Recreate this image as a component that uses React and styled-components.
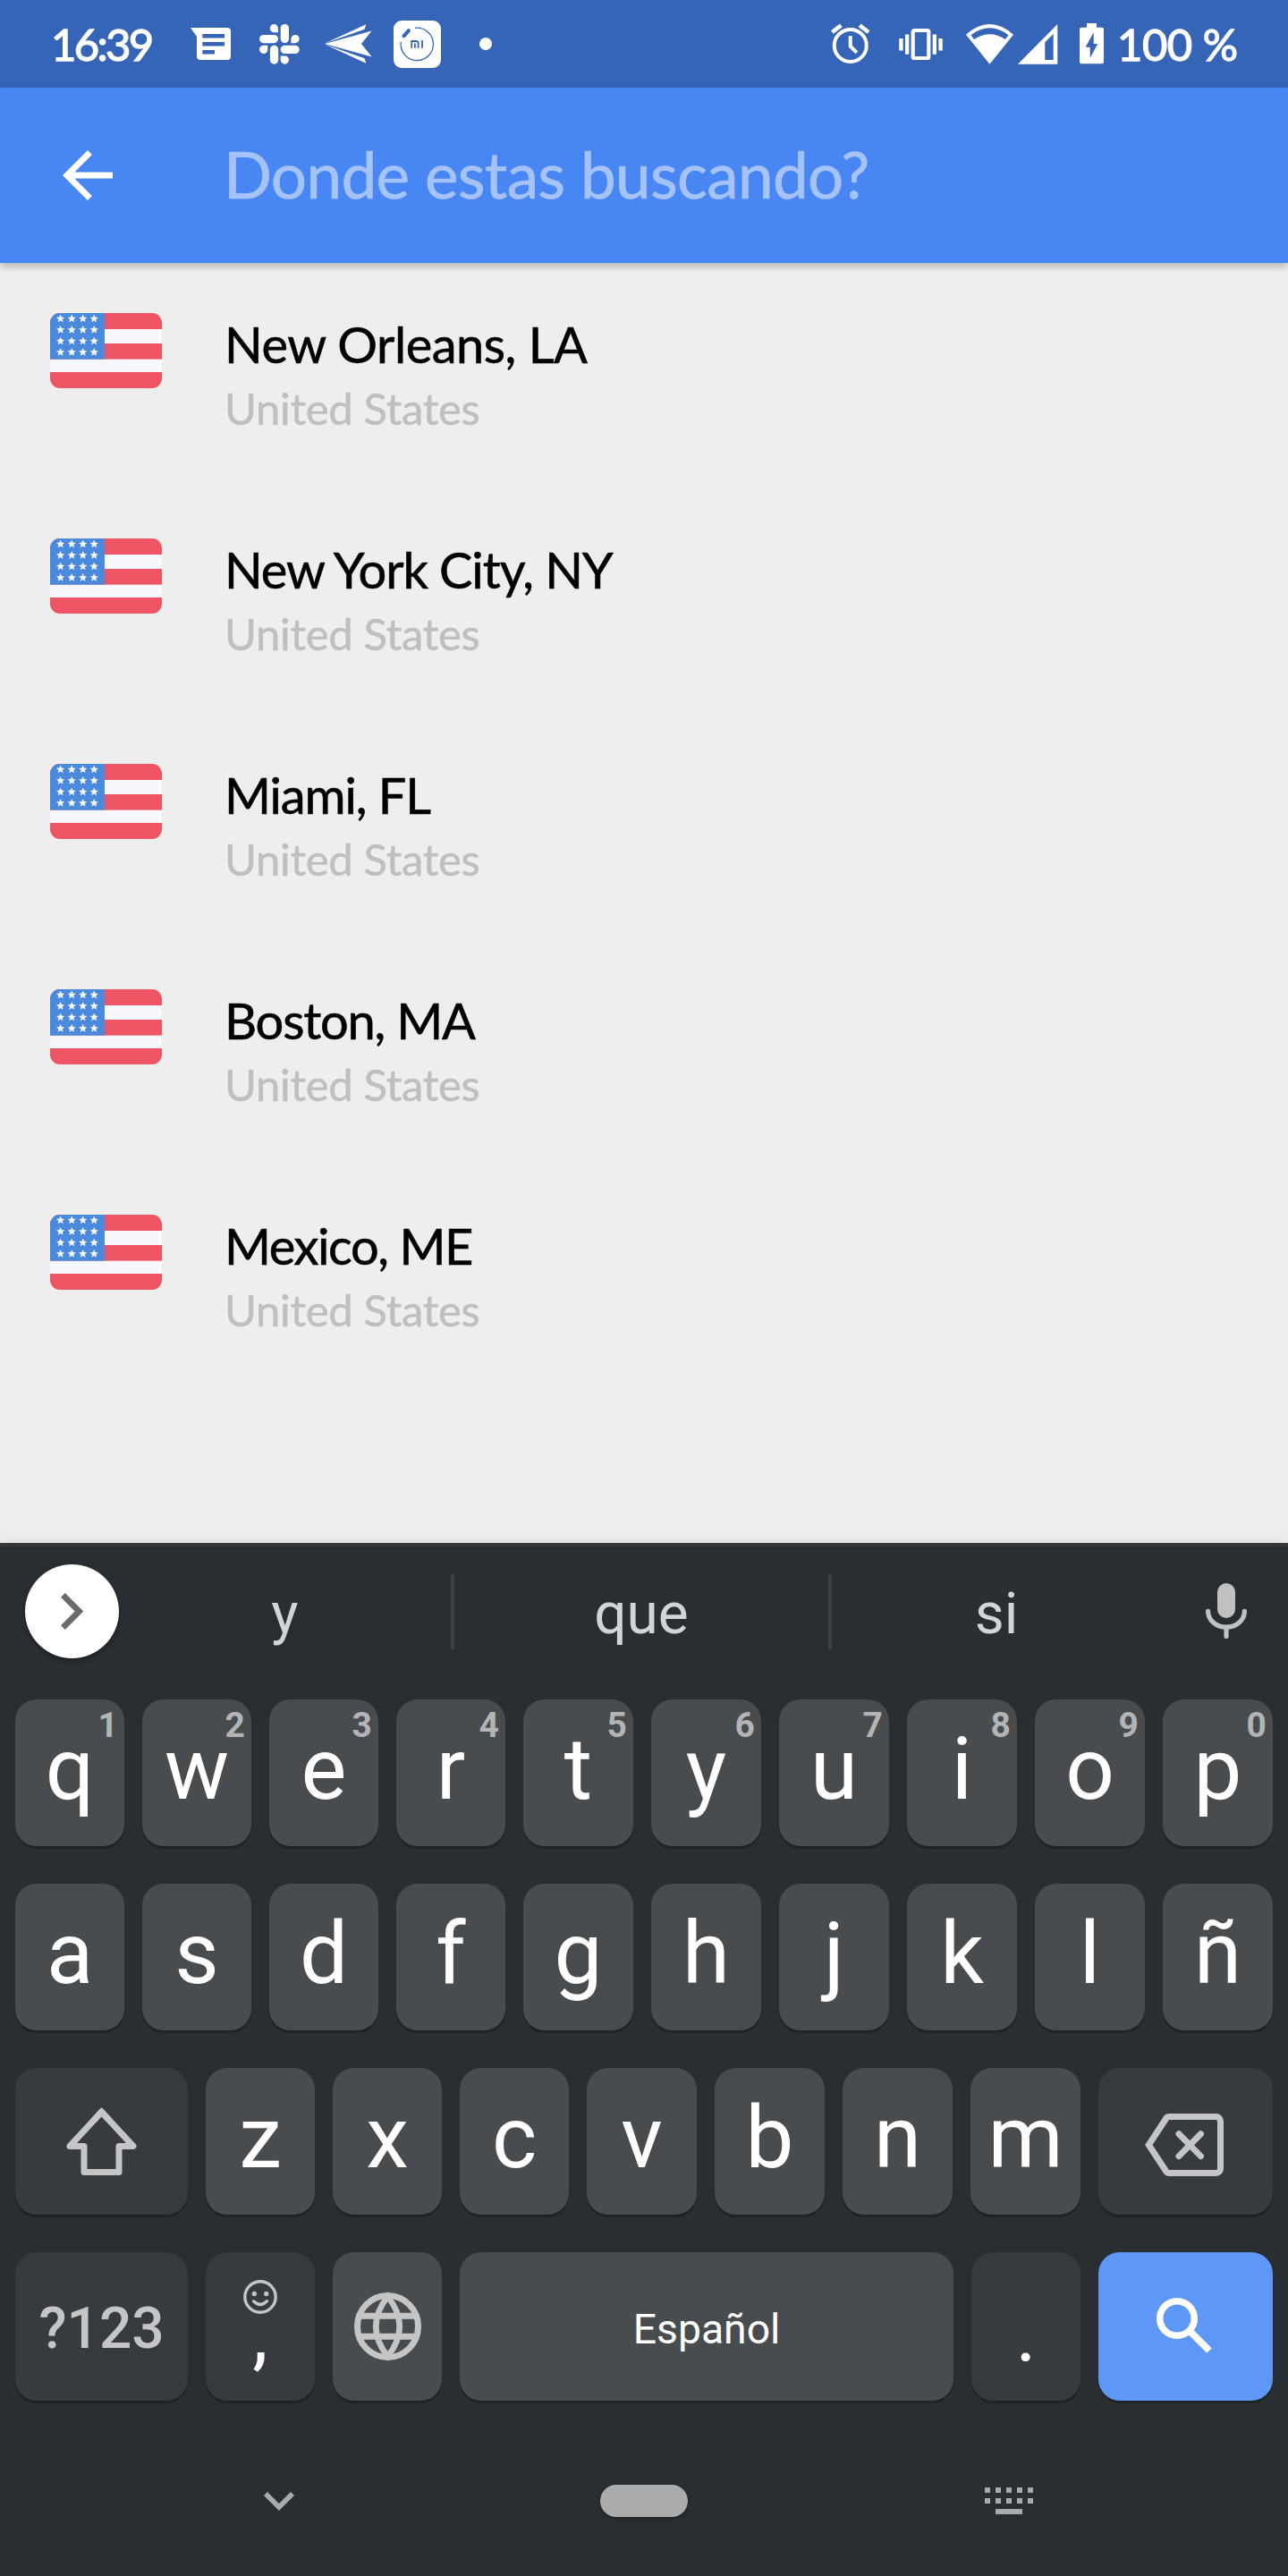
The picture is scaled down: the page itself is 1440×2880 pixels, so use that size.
import React from "react";
import styled, { createGlobalStyle } from "styled-components";

const GlobalStyle = createGlobalStyle`
  body { margin: 0; background: #eeeeee; }
  *, *::before, *::after { box-sizing: border-box; }
`;

const Screen = styled.div`
  width: 1440px;
  height: 2880px;
  display: flex;
  flex-direction: column;
  overflow: hidden;
  background: #eeeeee;
  font-family: Lato, "Liberation Sans", sans-serif;
`;

const Icon = styled.svg`
  display: block;
  flex: none;
  overflow: visible;
  width: ${(p) => p.$w}px;
  height: ${(p) => p.$h}px;
  margin-left: ${(p) => p.$ml || 0}px;
  margin-top: ${(p) => p.$mt || 0}px;
`;

/* ---------- status bar ---------- */

const StatusBar = styled.header`
  height: 98px;
  flex: none;
  display: flex;
  align-items: center;
  justify-content: space-between;
  padding: 0 56px 0 57px;
  background: #3665b8;
  color: #fff;
`;

const StatusGroup = styled.div`
  display: flex;
  align-items: center;
`;

const StatusText = styled.span`
  font-size: 49px;
  line-height: 60px;
  margin-top: -1px;
  white-space: nowrap;
  -webkit-text-stroke: 1.3px currentColor;
`;

const Clock = styled(StatusText)`
  width: 156px;
  letter-spacing: -2.7px;
`;

const BatteryText = styled(StatusText)`
  width: 135px;
  margin-left: 15px;
  letter-spacing: -0.5px;
`;

const Dot = styled.span`
  width: 14px;
  height: 14px;
  border-radius: 50%;
  background: #fff;
  margin-left: 43px;
`;

const MessagesIcon = () => (
  <Icon $w={45} $h={36} viewBox="0 0 45 36" fill="#fff" fillRule="evenodd">
    <path d="M0 0H41a4 4 0 0 1 4 4V32a4 4 0 0 1-4 4H11a4 4 0 0 1-4-4V10ZM13.3 7v4.5H38V7ZM13.3 16v4.5H38V16ZM13.3 25v4.5H27V25Z" />
  </Icon>
);

const SlackIcon = () => (
  <Icon $w={45} $h={45} $ml={32} viewBox="0 0 45 45" fill="#fff">
    <path d="M21 9.3V4.65A4.6 4.6 0 1 0 16.5 9.3Z" />
    <rect x="23.7" y="0" width="9.3" height="21" rx="4.65" />
    <rect x="0" y="11.9" width="21" height="9.3" rx="4.65" />
    <path d="M9.3 23.7H4.65A4.65 4.65 0 1 0 9.3 28.4Z" />
    <rect x="11.9" y="23.7" width="9.3" height="21" rx="4.65" />
    <rect x="23.7" y="23.7" width="21" height="9.3" rx="4.65" />
    <path d="M35.4 21.2H40A4.65 4.65 0 1 0 35.4 16.5Z" />
    <path d="M23.7 35.4V40A4.65 4.65 0 1 0 28.4 35.4Z" />
  </Icon>
);

const PlaneIcon = () => (
  <Icon $w={53} $h={44} $ml={28} viewBox="0 0 53 44" fill="#fff">
    <path d="M0 22L52.6 7.4L41 22L52.6 36.4Z" />
    <path d="M0 21.6L46.3 .2L44.5 5.8Z" />
    <path d="M0 22.4L46.3 43.8L44.5 38.2Z" />
  </Icon>
);

const MiIcon = () => (
  <Icon $w={53} $h={53} $ml={24} viewBox="0 0 53 53">
    <rect width="53" height="53" rx="9" fill="#fff" />
    <g fill="none" stroke="#3665b8">
      <path d="M24 8.3A18.2 18.2 0 1 1 8.2 24" strokeWidth="1.3" />
      <path d="M11.6 17.2L17 11.2" strokeWidth="4" strokeLinecap="round" />
      <path d="M20.2 30.8V23H25.4Q27.6 23 27.6 25.4V30.8M23.9 25.6V30.8M32 22V30.8" strokeWidth="1.8" />
    </g>
  </Icon>
);

const AlarmIcon = () => (
  <Icon $w={43.5} $h={44} viewBox="0 0 43.5 44" fill="none" stroke="#fff" strokeWidth="4">
    <circle cx="21.75" cy="23.9" r="18" />
    <path d="M21.75 13.2V24.6L28.9 31.8" />
    <path d="M1.4 9L11.4 1.4M42.1 9L32.1 1.4" strokeWidth="4.6" />
  </Icon>
);

const VibrateIcon = () => (
  <Icon $w={49} $h={35} $ml={33} viewBox="0 0 49 35" fill="#fff">
    <rect x="15.7" y="2" width="17.6" height="31" rx="1.6" fill="none" stroke="#fff" strokeWidth="4.2" />
    <path d="M7 6.6h4.3v22.2H7ZM.3 11h4.3v13.6H.3ZM37.7 6.6H42v22.2h-4.3ZM44.4 11h4.3v13.6h-4.3Z" />
  </Icon>
);

const WifiIcon = () => (
  <Icon $w={53} $h={44.7} $ml={26} viewBox="0 0 53 44.7" fill="#fff" fillRule="evenodd">
    <path d="M0 11.7Q26.5-11.7 53 11.7L26.5 44.7ZM5.5 12.2L9 17Q26.5 5.6 44 17L47.5 12.2Q26.5-3.6 5.5 12.2Z" />
  </Icon>
);

const SignalIcon = () => (
  <Icon $w={44.3} $h={44.7} $ml={4.5} viewBox="0 0 44.3 44.7" fill="#fff" fillRule="evenodd">
    <path d="M0 44.7L44.3 0V44.7ZM30.3 20.3V40H39.7V11Z" />
  </Icon>
);

const BatteryIcon = () => (
  <Icon $w={27} $h={45.3} $ml={25} viewBox="0 0 27 45.3" fill="#fff" fillRule="evenodd">
    <path d="M8 0H19V4.7H25a2 2 0 0 1 2 2V43.3a2 2 0 0 1-2 2H2a2 2 0 0 1-2-2V6.7a2 2 0 0 1 2-2H8ZM15.7 10.3L6.7 26.7H11.7V38.7L20.3 23H15.7Z" />
  </Icon>
);

/* ---------- search bar ---------- */

const AppBar = styled.div`
  height: 196px;
  flex: none;
  display: flex;
  align-items: center;
  padding-left: 70px;
  background: #4886f3;
  box-shadow: 0 3px 9px rgba(0, 0, 0, 0.28);
`;

const SearchHint = styled.div`
  margin-left: 124px;
  padding-bottom: 3px;
  font-size: 71px;
  line-height: 90px;
  letter-spacing: -0.65px;
  color: #a5c3f9;
  white-space: nowrap;
  -webkit-text-stroke: 0.7px currentColor;
`;

/* ---------- results ---------- */

const Results = styled.ul`
  flex: 1;
  min-height: 0;
  margin: 0;
  padding: 56px 0 0 56px;
  list-style: none;
`;

const Result = styled.li`
  height: 252px;
  display: flex;
  align-items: flex-start;
  gap: 70px;
`;

const FlagSvg = styled.svg`
  display: block;
  width: 125px;
  height: 84px;
  border-radius: 11px;
`;

const City = styled.div`
  font-size: 56px;
  line-height: 70px;
  color: #000;
  letter-spacing: ${(p) => p.$ls}px;
  white-space: nowrap;
  -webkit-text-stroke: 0.6px currentColor;
`;

const Country = styled.div`
  margin-top: 1px;
  font-size: 49px;
  line-height: 70px;
  letter-spacing: -0.3px;
  color: #bfbfbf;
  white-space: nowrap;
  -webkit-text-stroke: 0.5px currentColor;
`;

const starPoints = (cx, cy, r) =>
  Array.from({ length: 10 }, (_, i) => {
    const a = (Math.PI / 5) * i - Math.PI / 2;
    const d = i % 2 ? r * 0.45 : r;
    return `${(cx + d * Math.cos(a)).toFixed(2)},${(cy + d * Math.sin(a)).toFixed(2)}`;
  }).join(" ");

const Flag = () => (
  <FlagSvg viewBox="0 0 125 84">
    <rect width="125" height="84" fill="#ee5564" />
    <rect y="18" width="125" height="16" fill="#f5f7fc" />
    <rect y="51.6" width="125" height="14.4" fill="#f5f7fc" />
    <rect width="61" height="51.6" fill="#4a89dc" />
    {[6.4, 18.9, 31.4, 43.9].map((y) =>
      [11.6, 24.2, 36.7, 49.2].map((x) => (
        <polygon key={`${x}-${y}`} points={starPoints(x, y, 4.9)} fill="#f5f7fc" />
      ))
    )}
  </FlagSvg>
);

/* ---------- keyboard ---------- */

const Keyboard = styled.section`
  height: 1155px;
  flex: none;
  display: flex;
  flex-direction: column;
  background: #292e32;
  border-top: 4px solid #32383c;
  box-shadow: 0 -2px 14px rgba(0, 0, 0, 0.07);
  font-family: Roboto, sans-serif;
`;

const Suggestions = styled.div`
  height: 171px;
  flex: none;
  display: flex;
  align-items: center;
  padding: 0 46px 26px 28px;
`;

const ExpandButton = styled.div`
  width: 105px;
  height: 105px;
  flex: none;
  display: flex;
  align-items: center;
  justify-content: center;
  border-radius: 50%;
  background: #fff;
  box-shadow: 0 3px 4px rgba(0, 0, 0, 0.3);
`;

const Suggestion = styled.div`
  width: ${(p) => p.$w}px;
  padding-top: 7px;
  text-align: center;
  font-size: 64px;
  line-height: 80px;
  color: #d2d4d5;
`;

const Divider = styled.div`
  width: 4px;
  height: 84px;
  background: #3e4246;
`;

const Keys = styled.div`
  display: flex;
  flex-direction: column;
  gap: 42px;
  padding: 0 17px;
`;

const KeyRow = styled.div`
  display: grid;
  grid-template-columns: ${(p) => p.$columns};
  column-gap: 20px;
  height: ${(p) => p.$h || 164}px;
`;

const letterColumns = "repeat(4, 122px) repeat(6, 123px)";
const shiftColumns = "193px repeat(3, 122px) repeat(4, 123px) 195px";
const bottomColumns = "193px 122px 122px 1fr 122px 195px";

const keyColors = { light: "#494c4e", dark: "#373b3f", accent: "#5e97f6" };

const Key = styled.div`
  position: relative;
  display: flex;
  align-items: center;
  justify-content: center;
  border-radius: 24px;
  background: ${(p) => keyColors[p.$tone || "light"]};
  box-shadow: 0 3px 0 #1f2326;
`;

const Letter = styled.span`
  padding-bottom: 8px;
  font-size: 96px;
  line-height: 110px;
  color: #fff;
`;

const Hint = styled.span`
  position: absolute;
  top: 9px;
  right: 7px;
  font-size: 39px;
  font-weight: 700;
  line-height: 40px;
  color: #b2b4b5;
`;

const PunctuationKey = styled(Key)`
  flex-direction: column;
  justify-content: flex-end;
  gap: 2px;
  padding-bottom: 55px;
`;

const Punctuation = styled.span`
  font-size: 88px;
  line-height: 40px;
  color: #fff;
`;

const KeyLabel = styled.span`
  padding-top: ${(p) => p.$pt}px;
  font-size: ${(p) => p.$size}px;
  font-weight: ${(p) => p.$weight || 400};
  line-height: 76px;
  color: ${(p) => p.$color};
`;

const NavBar = styled.nav`
  flex: 1;
  display: grid;
  grid-template-columns: 624px 192px 624px;
  align-items: center;
  justify-items: center;
  padding-top: 28px;
`;

const HomePill = styled.div`
  width: 98px;
  height: 36px;
  border-radius: 18px;
  background: #a9abad;
  box-shadow: 0 2px 4px rgba(0, 0, 0, 0.25);
`;

const grey = "#c3c5c6";

const cities = [
  ["New Orleans, LA", -0.5],
  ["New York City, NY", -1.1],
  ["Miami, FL", -1.1],
  ["Boston, MA", -1.2],
  ["Mexico, ME", -1.4],
];

export default function App() {
  return (
    <Screen>
      <GlobalStyle />
      <StatusBar>
        <StatusGroup>
          <Clock>16:39</Clock>
          <MessagesIcon />
          <SlackIcon />
          <PlaneIcon />
          <MiIcon />
          <Dot />
        </StatusGroup>
        <StatusGroup>
          <AlarmIcon />
          <VibrateIcon />
          <WifiIcon />
          <SignalIcon />
          <BatteryIcon />
          <BatteryText>100 %</BatteryText>
        </StatusGroup>
      </StatusBar>

      <AppBar>
        <Icon $w={56} $h={56} viewBox="4 4 16 16" fill="#fff">
          <path d="M20 11H7.83l5.59-5.59L12 4l-8 8 8 8 1.41-1.41L7.83 13H20v-2z" />
        </Icon>
        <SearchHint>Donde estas buscando?</SearchHint>
      </AppBar>

      <Results>
        {cities.map(([name, ls]) => (
          <Result key={name}>
            <Flag />
            <div>
              <City $ls={ls}>{name}</City>
              <Country>United States</Country>
            </div>
          </Result>
        ))}
      </Results>

      <Keyboard>
        <Suggestions>
          <ExpandButton>
            <Icon $w={25.3} $h={41} viewBox="8.59 6 7.41 12" fill="#6b6b6b">
              <path d="M8.59 16.59L13.17 12 8.59 7.41 10 6l6 6-6 6z" />
            </Icon>
          </ExpandButton>
          <Suggestion $w={371}>y</Suggestion>
          <Divider />
          <Suggestion $w={418}>que</Suggestion>
          <Divider />
          <Suggestion $w={368}>si</Suggestion>
          <Icon $w={46} $h={62} $ml={50} $mt={-2} viewBox="0 0 46 62" fill="none" stroke="#bfc1c2">
            <rect x="13" y="0" width="20" height="39" rx="10" fill="#bfc1c2" stroke="none" />
            <path d="M2.6 31.4a20.4 17.8 0 0 0 40.8 0M23 50V59.4" strokeWidth="5.2" strokeLinecap="round" />
          </Icon>
        </Suggestions>

        <Keys>
          <KeyRow $columns={letterColumns}>
            {[..."qwertyuiop"].map((c, i) => (
              <Key key={c}>
                <Letter>{c}</Letter>
                <Hint>{(i + 1) % 10}</Hint>
              </Key>
            ))}
          </KeyRow>
          <KeyRow $columns={letterColumns}>
            {[..."asdfghjklñ"].map((c) => (
              <Key key={c}>
                <Letter>{c}</Letter>
              </Key>
            ))}
          </KeyRow>
          <KeyRow $columns={shiftColumns}>
            <Key $tone="dark">
              <Icon $w={79} $h={76} viewBox="0 0 79 76" fill="none" stroke={grey} strokeWidth="7">
                <path d="M39.5 5.2L75 43.5H59V72.5H20V43.5H4Z" strokeLinejoin="round" />
                <path d="M30 15.4L39.5 5.2L49 15.4" />
              </Icon>
            </Key>
            {[..."zxcvbnm"].map((c) => (
              <Key key={c}>
                <Letter>{c}</Letter>
              </Key>
            ))}
            <Key $tone="dark">
              <Icon
                $w={88}
                $h={70}
                $ml={-4}
                $mt={7}
                viewBox="0 0 88 70"
                fill="none"
                stroke={grey}
                strokeWidth="7"
                strokeLinecap="round"
              >
                <path d="M27 3.5H79.5a5 5 0 0 1 5 5V61.5a5 5 0 0 1-5 5H27Q25 66.5 24 65L4.3 35L24 5Q25 3.5 27 3.5Z" />
                <path d="M38 22.8L62.5 47.6M62.5 22.8L38 47.6" />
              </Icon>
            </Key>
          </KeyRow>
          <KeyRow $columns={bottomColumns} $h={166}>
            <Key $tone="dark">
              <KeyLabel $size={64} $weight={500} $pt={6} $color={grey}>
                ?123
              </KeyLabel>
            </Key>
            <PunctuationKey $tone="dark">
              <Icon $w={38} $h={38} viewBox="0 0 38 38" fill="none" stroke={grey} strokeWidth="3.4">
                <circle cx="19" cy="19" r="17.2" />
                <path d="M11.6 23.8Q19 31 26.4 23.8" strokeLinecap="round" />
                <circle cx="12.3" cy="15.4" r="2.6" fill={grey} stroke="none" />
                <circle cx="25.7" cy="15.4" r="2.6" fill={grey} stroke="none" />
              </Icon>
              <Punctuation>,</Punctuation>
            </PunctuationKey>
            <Key>
              <Icon $w={75} $h={76} viewBox="0 0 75 76" fill="none" stroke={grey} strokeWidth="7">
                <ellipse cx="37.5" cy="38" rx="34" ry="34.5" />
                <path d="M37.5 4.5Q11 38 37.5 71.5Q64 38 37.5 4.5Z" strokeWidth="6.6" />
                <path d="M6 26.3H69M6 49.3H69" />
              </Icon>
            </Key>
            <Key>
              <KeyLabel $size={46.3} $pt={5} $color="#fff">
                Español
              </KeyLabel>
            </Key>
            <PunctuationKey $tone="dark">
              <Punctuation>.</Punctuation>
            </PunctuationKey>
            <Key $tone="accent">
              <Icon $w={62} $h={62} $ml={-3} $mt={-2} viewBox="0 0 62 62" fill="none" stroke="#fff" strokeWidth="7.6">
                <circle cx="23" cy="23" r="19.3" />
                <path d="M37 37L59 59" />
              </Icon>
            </Key>
          </KeyRow>
        </Keys>

        <NavBar>
          <Icon $w={34} $h={21} viewBox="6 8.59 12 7.41" fill="#a9abad">
            <path d="M16.59 8.59L12 13.17 7.41 8.59 6 10l6 6 6-6z" />
          </Icon>
          <HomePill />
          <Icon $w={54} $h={30} viewBox="0 0 54 30" fill="#a9abad">
            {[0, 12].map((y) =>
              [0, 12, 24, 36, 48].map((x) => <rect key={`${x}-${y}`} x={x} y={y} width="6" height="6" />)
            )}
            <rect x="12" y="24" width="30" height="6" />
          </Icon>
        </NavBar>
      </Keyboard>
    </Screen>
  );
}
